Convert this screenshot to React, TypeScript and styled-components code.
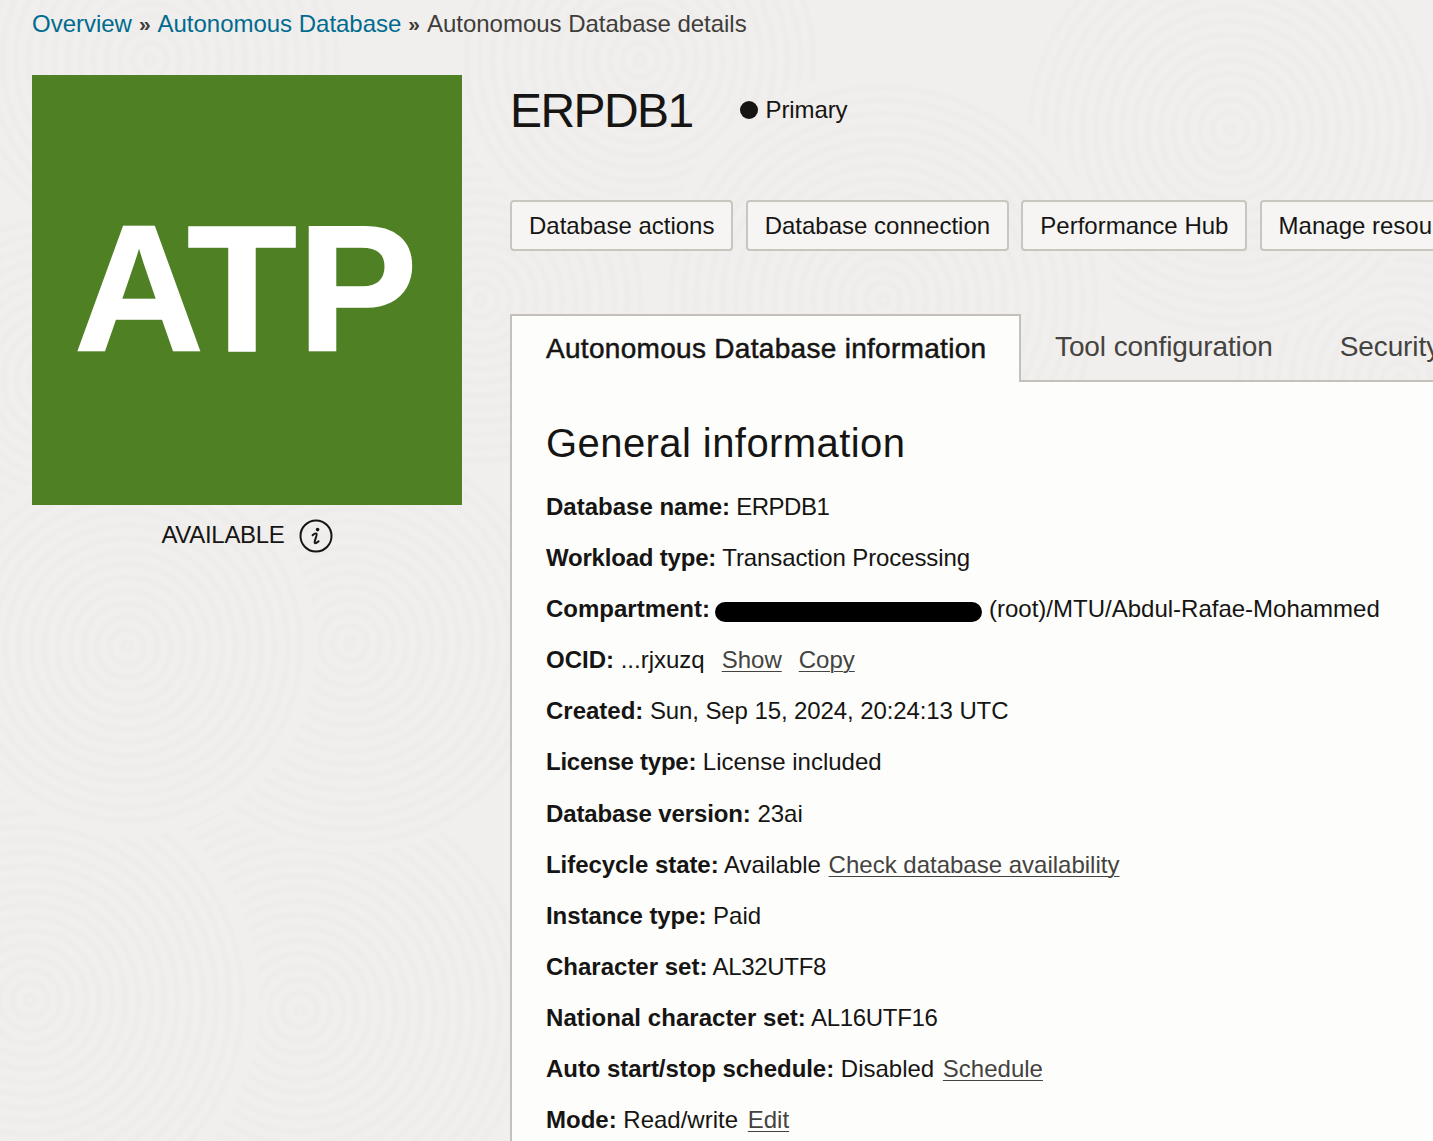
import styled, { createGlobalStyle } from 'styled-components';

const BASE = '#f0efed';
const RING = '#edecea';

// one swirl of the page texture, opaque so that later discs tuck under earlier ones
const swirl = (x: number, y: number, radius: number, step = 13) => {
  const stops: string[] = [];
  for (let r = 0; r + step <= radius; r += step) {
    stops.push(`${BASE} ${r}px`, `${RING} ${r + step * 0.35}px`, `${BASE} ${r + step * 0.7}px`);
  }
  stops.push(`${BASE} ${radius - 0.5}px`, `transparent ${radius}px`);
  return `radial-gradient(circle at ${x}px ${y}px, ${stops.join(', ')})`;
};

const texture = [
  swirl(127, 647, 190),
  swirl(350, 643, 210),
  swirl(883, 300, 230),
  swirl(1230, 130, 210),
  swirl(640, 60, 190),
  swirl(150, 60, 200),
  swirl(60, 380, 180),
  swirl(30, 1000, 230),
  swirl(300, 1010, 240),
  swirl(1400, 380, 180),
  swirl(480, 300, 180),
].join(', ');

const GlobalStyle = createGlobalStyle`
  html, body {
    margin: 0;
    height: 100%;
    overflow: hidden;
  }
  body {
    font-family: 'Liberation Sans', Arial, sans-serif;
    color: #161513;
    background-color: ${BASE};
    background-image: ${texture};
  }
`;

const Page = styled.div`
  width: 1433px;
  height: 1141px;
  box-sizing: border-box;
  padding: 10px 0 0 32px;
  overflow: hidden;
`;

const Breadcrumbs = styled.nav`
  display: flex;
  align-items: center;
  height: 28px;
  font-size: 24px;
  letter-spacing: -0.02px;
  color: #3f3d3a;
  white-space: nowrap;
`;

const Crumb = styled.a`
  color: #006b8f;
`;

const Separator = styled.span`
  margin: 0 7px;
  font-size: 21px;
  font-weight: 700;
  color: #3f3d3a;
`;

const Columns = styled.div`
  display: flex;
  align-items: flex-start;
  gap: 48px;
  margin-top: 37px;
`;

const Side = styled.aside`
  flex: 0 0 430px;
  display: flex;
  flex-direction: column;
  align-items: center;
`;

const Tile = styled.div`
  width: 430px;
  height: 430px;
  padding: 124px 0 0 42px;
  box-sizing: border-box;
  background: #4f8124;
  color: #fff;
  font-size: 180px;
  font-weight: 700;
  line-height: 1;
  white-space: nowrap;
  -webkit-text-stroke: 1.5px #fff;
`;

const Glyph = styled.span<{ $track: number }>`
  letter-spacing: ${p => p.$track}px;
`;

const StatusRow = styled.div`
  display: flex;
  align-items: center;
  gap: 14px;
  margin-top: 14px;
  font-size: 24px;
  letter-spacing: -0.3px;
`;

const StatusText = styled.span`
  margin-bottom: 3px;
`;

const Main = styled.main`
  flex: 0 0 auto;
  width: 923px;
  min-width: 0;
`;

const TitleRow = styled.header`
  display: flex;
  align-items: center;
  height: 70px;
`;

const Title = styled.h1`
  margin: 0;
  font-size: 48px;
  font-weight: 400;
  letter-spacing: -1.6px;
`;

const Role = styled.span`
  display: flex;
  align-items: center;
  gap: 7px;
  margin-left: 48px;
  font-size: 24px;
  letter-spacing: -0.1px;
`;

const Dot = styled.span`
  width: 18px;
  height: 18px;
  border-radius: 50%;
  background: #161513;
`;

const Actions = styled.div`
  display: flex;
  gap: 12.2px;
  margin-top: 55px;
  white-space: nowrap;
`;

const ActionButton = styled.button`
  flex: none;
  height: 51px;
  padding: 0 17px;
  font-family: inherit;
  font-size: 24px;
  color: #161513;
  background: #f6f5f3;
  border: 2px solid #c9c5bf;
  border-radius: 4px;
`;

const Tabs = styled.div`
  display: flex;
  align-items: flex-end;
  height: 68px;
  margin-top: 63px;
  white-space: nowrap;
`;

const ActiveTab = styled.div`
  flex: none;
  box-sizing: border-box;
  width: 511px;
  height: 68px;
  padding: 17px 0 0 34px;
  font-size: 28px;
  letter-spacing: 0.3px;
  -webkit-text-stroke: 0.5px #161513;
  background: #fdfdfc;
  border: 2px solid #c4c0ba;
  border-bottom: 0;
`;

const TabStrip = styled.div`
  flex: 1;
  display: flex;
  gap: 67px;
  box-sizing: border-box;
  height: 68px;
  padding: 17px 0 0 34px;
  font-size: 28px;
  letter-spacing: -0.1px;
  color: #45433f;
  border-bottom: 2px solid #c4c0ba;
`;

const Panel = styled.section`
  box-sizing: border-box;
  height: 800px;
  padding: 31px 0 0 34px;
  background: #fdfdfc;
  border-left: 2px solid #c4c0ba;
`;

const SectionTitle = styled.h2`
  margin: 0 0 8px;
  font-size: 40px;
  line-height: 60px;
  font-weight: 400;
  letter-spacing: 0.43px;
`;

const Row = styled.div<{ $track?: number }>`
  height: 51.1px;
  font-size: 24px;
  line-height: 51px;
  letter-spacing: ${p => p.$track ?? 0}px;
  white-space: nowrap;
`;

const Label = styled.b<{ $track?: number }>`
  font-weight: 700;
  letter-spacing: ${p => p.$track ?? 0}px;
`;

const Action = styled.a<{ $gap?: number }>`
  margin-left: ${p => p.$gap ?? 0}px;
  letter-spacing: 0;
  color: #45433f;
  text-decoration: underline;
  text-decoration-thickness: 1px;
  text-underline-offset: 3px;
`;

const Redaction = styled.span`
  display: inline-block;
  width: 267px;
  height: 20px;
  margin: 0 7px 0 5px;
  vertical-align: -5px;
  background: #000;
  border-radius: 10px;
`;

function InfoIcon() {
  return (
    <svg width="34" height="34" viewBox="0 0 34 34" aria-hidden="true">
      <circle cx="17" cy="17" r="15.5" fill="none" stroke="#161513" strokeWidth="2" />
      <circle cx="18.6" cy="10.6" r="1.8" fill="#161513" />
      <path
        d="M13.6 16.2c1.4-1.4 3.4-2.2 4-1.4.5.7-.3 2.4-1 4.6-.7 2.2-1.3 3.9-.8 4.5.6.7 2.4-.2 3.8-1.6"
        fill="none"
        stroke="#161513"
        strokeWidth="2"
        strokeLinecap="round"
      />
    </svg>
  );
}

export default function App() {
  return (
    <>
      <GlobalStyle />
      <Page>
        <Breadcrumbs>
          <Crumb>Overview</Crumb>
          <Separator>»</Separator>
          <Crumb>Autonomous Database</Crumb>
          <Separator>»</Separator>
          <span>Autonomous Database details</span>
        </Breadcrumbs>
        <Columns>
          <Side>
            <Tile>
              <Glyph $track={-17}>A</Glyph>
              <Glyph $track={0.5}>T</Glyph>
              <Glyph $track={0}>P</Glyph>
            </Tile>
            <StatusRow>
              <StatusText>AVAILABLE</StatusText>
              <InfoIcon />
            </StatusRow>
          </Side>
          <Main>
            <TitleRow>
              <Title>ERPDB1</Title>
              <Role>
                <Dot />
                Primary
              </Role>
            </TitleRow>
            <Actions>
              <ActionButton>Database actions</ActionButton>
              <ActionButton>Database connection</ActionButton>
              <ActionButton>Performance Hub</ActionButton>
              <ActionButton>Manage resource allocation</ActionButton>
            </Actions>
            <Tabs>
              <ActiveTab>Autonomous Database information</ActiveTab>
              <TabStrip>
                <span>Tool configuration</span>
                <span>Security</span>
              </TabStrip>
            </Tabs>
            <Panel>
              <SectionTitle>General information</SectionTitle>
              <Row $track={-0.5}><Label>Database name:</Label> ERPDB1</Row>
              <Row $track={-0.1}><Label $track={-0.2}>Workload type:</Label> Transaction Processing</Row>
              <Row><Label>Compartment:</Label><Redaction />(root)/MTU/Abdul-Rafae-Mohammed</Row>
              <Row>
                <Label>OCID:</Label> ...rjxuzq<Action $gap={17}>Show</Action><Action $gap={17}>Copy</Action>
              </Row>
              <Row $track={-0.1}><Label>Created:</Label> Sun, Sep 15, 2024, 20:24:13 UTC</Row>
              <Row><Label $track={-0.25}>License type:</Label> License included</Row>
              <Row><Label $track={-0.12}>Database version:</Label> 23ai</Row>
              <Row><Label $track={-0.05}>Lifecycle state:</Label> Available <Action $gap={1}>Check database availability</Action></Row>
              <Row><Label $track={-0.07}>Instance type:</Label> Paid</Row>
              <Row $track={-0.3}><Label>Character set:</Label> AL32UTF8</Row>
              <Row $track={-0.3}><Label $track={0.05}>National character set:</Label> AL16UTF16</Row>
              <Row><Label $track={-0.05}>Auto start/stop schedule:</Label> Disabled <Action $gap={2}>Schedule</Action></Row>
              <Row><Label>Mode:</Label> Read/write <Action $gap={3}>Edit</Action></Row>
            </Panel>
          </Main>
        </Columns>
      </Page>
    </>
  );
}
